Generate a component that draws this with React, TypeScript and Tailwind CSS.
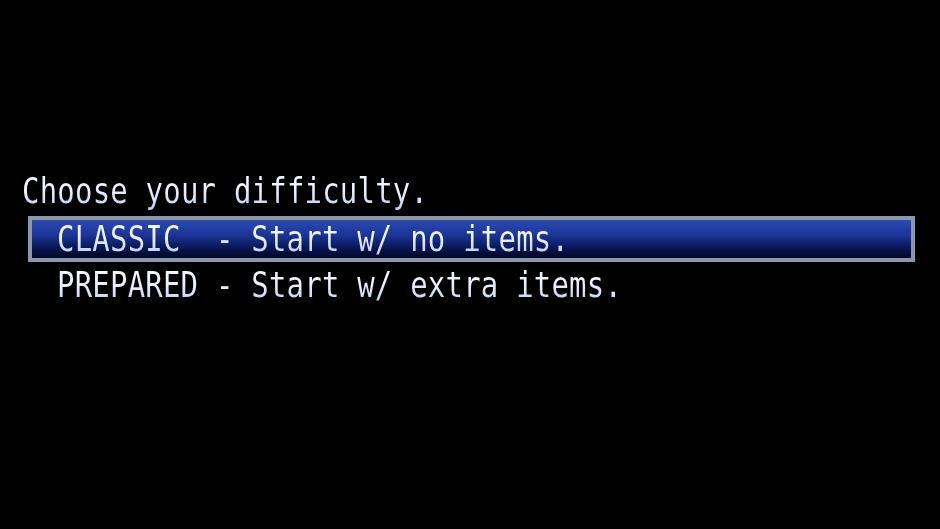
import React from 'react';

const options = [
  { label: 'CLASSIC  - Start w/ no items.', selected: true },
  { label: 'PREPARED - Start w/ extra items.', selected: false },
];

const Line: React.FC<{ text: string; height: string }> = ({ text, height }) => (
  <div className={`${height} whitespace-pre tracking-[0.2px]`}>
    <span className="inline-block scale-y-[1.2] bg-gradient-to-b from-[#ffffff] via-[#eaf0fb] to-[#a4bbe8] bg-clip-text text-transparent">
      {text}
    </span>
  </div>
);

const App: React.FC = () => {
  return (
    <div className="w-[940px] h-[529px] bg-black overflow-hidden font-['DejaVu_Sans_Mono',monospace] text-[29px]">
      <div className="flex flex-col pt-[168px]">
        {/* Prompt */}
        <div className="pl-[22px]">
          <Line text="Choose your difficulty." height="h-[46px] leading-[46px]" />
        </div>

        {/* Options */}
        <div className="flex flex-col pt-[2px]">
          {options.map((opt) =>
            opt.selected ? (
              <div
                key={opt.label}
                className="ml-[28px] w-[887px] h-[46px] border-[4px] border-[#8b97ab] bg-[linear-gradient(to_bottom,#2c4ab4_0%,#1b3595_40%,#0a1858_72%,#02061e_100%)] pl-[25px]"
              >
                <Line text={opt.label} height="h-[38px] leading-[38px]" />
              </div>
            ) : (
              <div key={opt.label} className="pl-[57px]">
                <Line text={opt.label} height="h-[46px] leading-[46px]" />
              </div>
            )
          )}
        </div>
      </div>
    </div>
  );
};

export default App;
